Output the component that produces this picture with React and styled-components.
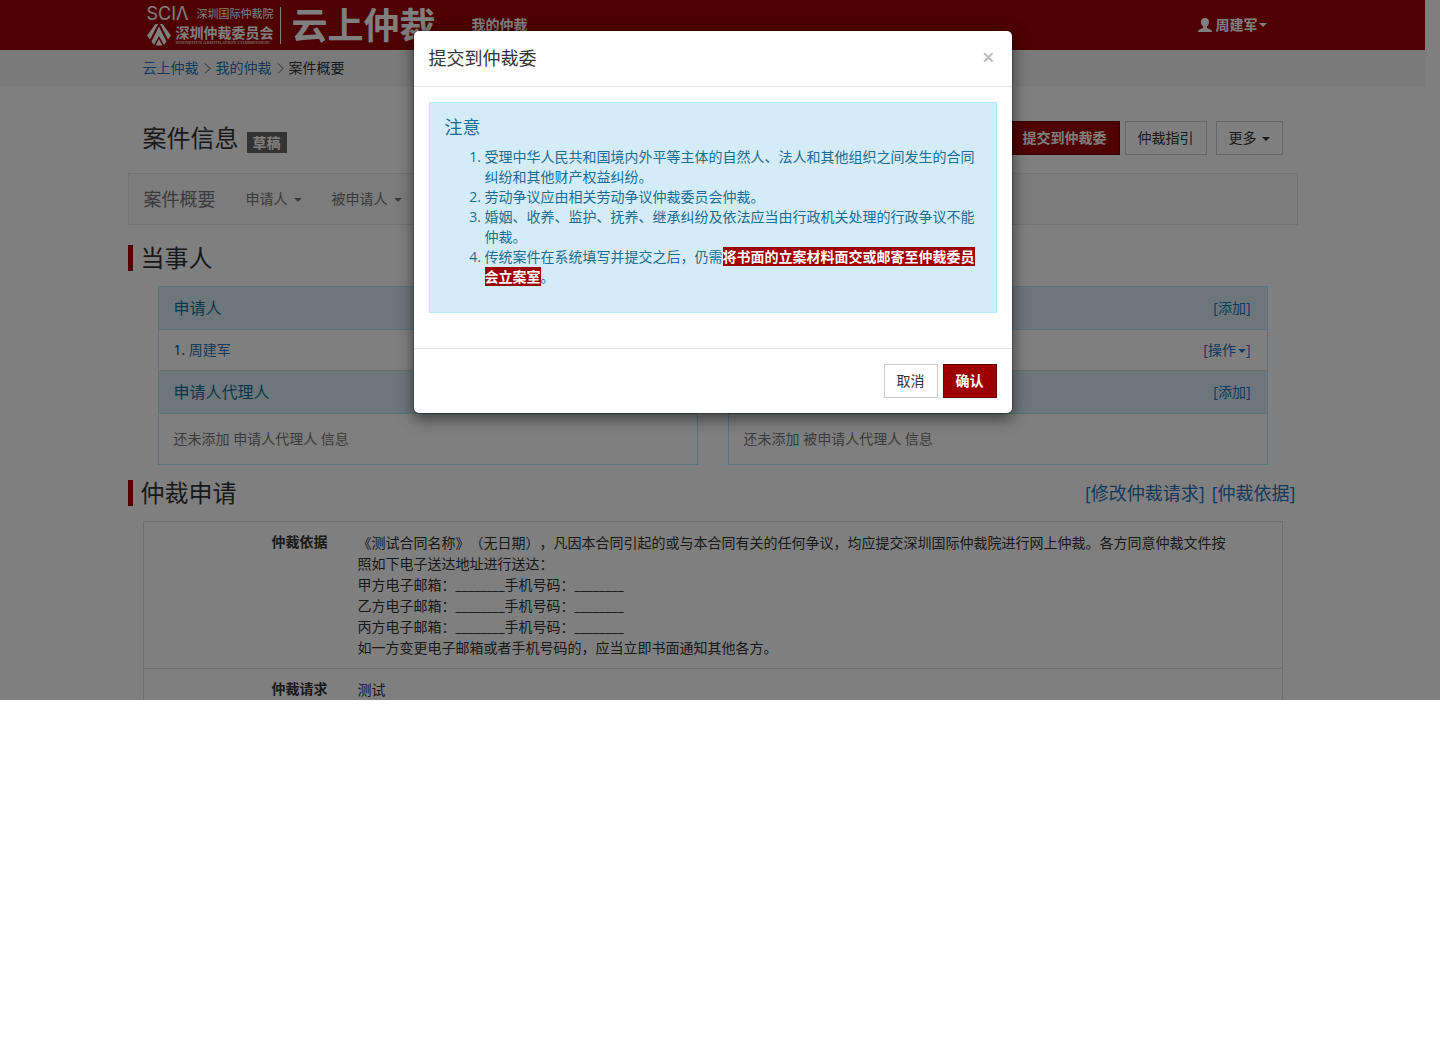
import React from 'react';
import styled, { createGlobalStyle, css } from 'styled-components';

const red = '#9e0000';
const blue = '#2672b8';

const GlobalStyle = createGlobalStyle`
  *, *::before, *::after { box-sizing: border-box; }
  body {
    margin: 0;
    background: #fff;
    color: #333;
    font-family: "Open Sans", "Noto Sans CJK SC", sans-serif;
    font-size: 14px;
    line-height: 20px;
    text-spacing-trim: space-all;
  }
  button { font-family: inherit; }
  h1, h2, h3, h4, p, ol, ul, dl, dd { margin: 0; padding: 0; font-weight: 400; }
`;

const Screen = styled.div`
  position: relative;
  max-height: 700px;
  overflow: hidden;
  padding-right: 15px;
`;

const Container = styled.div`
  width: 100%;
  max-width: 1170px;
  margin: 0 auto;
`;

const TopBar = styled.header`
  background: ${red};
`;

const TopBarInner = styled(Container)`
  display: flex;
  align-items: center;
  height: 50px;
  padding: 0 31px 0 19px;
`;

const Brand = styled.a`
  display: flex;
  align-items: center;
  gap: 6px;
  color: #fff;
  text-decoration: none;
`;

const BrandNames = styled.span`
  display: flex;
  flex-direction: column;
  gap: 2px;
  padding-top: 2px;
`;

const BrandLine = styled.span`
  display: flex;
  align-items: center;
  justify-content: space-between;
  gap: 5px;
  height: ${p => (p.$tall ? '22px' : '16px')};
`;

const Latin = styled.span`
  font: 400 18px/16px Inter, sans-serif;
`;

const Institute = styled.span`
  font-size: 11px;
  line-height: 16px;
`;

const Commission = styled.span`
  display: flex;
  flex-direction: column;
  font-size: 14px;
  font-weight: 700;
  line-height: 15px;
`;

const CommissionLatin = styled.span`
  font: 400 5px/6px "Liberation Serif", serif;
`;

const BrandRule = styled.span`
  width: 1px;
  height: 37px;
  background: #fff;
`;

const Product = styled.span`
  padding: 2px 0 0 5px;
  font-size: 36px;
  font-weight: 700;
  line-height: 40px;
`;

const TopLink = styled.a`
  margin-left: 36px;
  color: #fff;
  font-weight: 700;
  text-decoration: none;
`;

const UserButton = styled.button`
  display: flex;
  align-items: center;
  margin-left: auto;
  padding: 0;
  border: 0;
  background: none;
  color: #fff;
  font-size: 14px;
  font-weight: 700;
  line-height: 20px;
  svg { margin-right: 4px; }
`;

const Caret = styled.span`
  display: inline-block;
  margin-left: ${p => p.$gap || 0}px;
  border-top: 4px solid;
  border-left: 4px solid transparent;
  border-right: 4px solid transparent;
  vertical-align: middle;
`;

const CrumbBar = styled.nav`
  background: #f5f5f5;
`;

const Crumbs = styled(Container)`
  display: flex;
  align-items: center;
  gap: 5px;
  padding: 8px 15px;
`;

const Link = styled.a`
  color: ${blue};
  text-decoration: none;
`;

const TitleRow = styled.div`
  display: flex;
  align-items: center;
  padding: 35px 15px 18px;
`;

const Title = styled.h1`
  font-size: 24px;
  line-height: 34px;
`;

const Tag = styled.span`
  margin: 8px 0 0 8px;
  padding: 0 6px;
  background: #666;
  color: #fff;
  font-size: 14px;
  font-weight: 700;
  line-height: 21px;
`;

const Actions = styled.div`
  display: flex;
  gap: 5px;
  margin-left: auto;
`;

const Button = styled.button`
  padding: 6px 12px;
  border: 1px solid #ccc;
  margin-left: ${p => (p.$apart ? '4px' : '0')};
  background: #fff;
  color: #333;
  font-size: 14px;
  line-height: 20px;
  ${p => p.$primary && css`
    border-color: #6b0000;
    background: ${red};
    color: #fff;
    font-weight: 700;
  `}
`;

const CaseNav = styled.nav`
  display: flex;
  align-items: center;
  gap: 30px;
  height: 52px;
  padding: 0 15px;
  border: 1px solid #e7e7e7;
  background: #f8f8f8;
`;

const CaseNavBrand = styled.a`
  color: #777;
  font-size: 18px;
  text-decoration: none;
`;

const CaseNavItem = styled.button`
  padding: 0;
  border: 0;
  background: none;
  color: #777;
  font-size: 14px;
  line-height: 20px;
`;

const SectionHead = styled.div`
  display: flex;
  align-items: center;
  justify-content: space-between;
  height: 26px;
  margin: ${p => p.$top}px 0 15px;
  padding: 0 2px 0 8px;
  border-left: 5px solid ${red};
`;

const SectionTitle = styled.h2`
  font-size: 24px;
  line-height: 26px;
`;

const SectionLinks = styled.div`
  display: flex;
  gap: 7px;
  font-size: 18px;
`;

const Parties = styled.div`
  display: grid;
  grid-template-columns: 1fr 1fr;
  gap: 30px;
  padding: 0 30px;
`;

const Party = styled.section`
  border: 1px solid #b2ebf2;
`;

const PartyHead = styled.div`
  display: flex;
  align-items: center;
  justify-content: space-between;
  height: 43px;
  padding: 0 16px 0 15px;
  border-bottom: 1px solid #b2ebf2;
  background: #d9edf7;
`;

const PartyTitle = styled.h3`
  color: #1b6d93;
  font-size: 16px;
`;

const PartyRow = styled.div`
  display: flex;
  justify-content: space-between;
  padding: 10px 16px 10px 15px;
  border-bottom: 1px solid #ddd;
`;

const MenuLink = styled.button`
  padding: 0;
  border: 0;
  background: none;
  color: ${blue};
  font-size: 14px;
  line-height: 20px;
`;

const Empty = styled.p`
  padding: 15px;
  color: #777;
`;

const Claims = styled.dl`
  margin: 0 15px;
  border: 1px solid #ddd;
`;

const Claim = styled.div`
  display: grid;
  grid-template-columns: 184px 1fr;
  gap: 30px;
  padding: 10px 43px 10px 0;
  line-height: 21px;
  & + & { border-top: 1px solid #ddd; }
`;

const ClaimLabel = styled.dt`
  font-weight: 700;
  line-height: 20px;
  text-align: right;
`;

const Backdrop = styled.div`
  position: absolute;
  inset: 0;
  padding: 30px 15px 30px 0;
  background: rgba(0, 0, 0, 0.5);
`;

const Dialog = styled.div`
  width: 100%;
  max-width: 600px;
  margin: 0 auto;
  border: 1px solid rgba(0, 0, 0, 0.2);
  border-radius: 6px;
  background: #fff;
  background-clip: padding-box;
  box-shadow: 0 5px 15px rgba(0, 0, 0, 0.5);
`;

const DialogHead = styled.div`
  display: flex;
  justify-content: space-between;
  padding: 15px;
  border-bottom: 1px solid #e5e5e5;
`;

const DialogTitle = styled.h2`
  font-size: 18px;
  line-height: 25px;
`;

const Close = styled.button`
  align-self: flex-start;
  padding: 0 2px;
  border: 0;
  background: none;
  color: #bbb;
  font-size: 22px;
  font-weight: 600;
  line-height: 20px;
`;

const DialogBody = styled.div`
  padding: 15px 15px 35px;
`;

const Notice = styled.div`
  padding: 14px 15px 25px;
  border: 1px solid #b2ebf2;
  background: #d4ecf8;
  color: #1b6d93;
`;

const NoticeTitle = styled.h3`
  margin-bottom: 10px;
  font-size: 18px;
  line-height: 20px;
`;

const Rules = styled.ol`
  padding-left: 40px;
`;

const Mark = styled.strong`
  background: ${red};
  color: #fff;
`;

const DialogFoot = styled.div`
  display: flex;
  justify-content: flex-end;
  gap: 5px;
  padding: 15px;
  border-top: 1px solid #e5e5e5;
`;

const Emblem = () => (
  <svg width="24" height="22" viewBox="0 0 24 22" fill="#fff" aria-hidden="true">
    <path d="M8.500 0H11L3 15.500L0 11.500Z" />
    <path d="M15.500 0H13L21 15.500L24 11.500Z" />
    <path d="M12 2.500L19.500 17.500L17 21L12 12L7 21L4.500 17.500Z" />
    <path d="M12 15L15.500 21.500H8.500Z" />
  </svg>
);

const UserIcon = () => (
  <svg width="14" height="14" viewBox="0 0 14 14" fill="#fff" aria-hidden="true">
    <path d="M7 0C9.600 0 11 1.500 11 4C11 6 10.200 7.300 9 8.400C8.600 8.900 8.700 9.700 9.300 10L12.800 11.700C13.700 12.200 14 13 14 14H0C0 13 .3 12.200 1.200 11.700L4.700 10C5.300 9.700 5.400 8.900 5 8.400C3.800 7.300 3 6 3 4C3 1.500 4.400 0 7 0Z" />
  </svg>
);

const Chevron = () => (
  <svg width="7" height="11" viewBox="0 0 7 11" fill="none" stroke="#555" aria-hidden="true">
    <path d="M1 .5L6 5.500L1 10.500" />
  </svg>
);

const contacts = ['甲方', '乙方', '丙方'];

const parties = [
  { role: '申请人', name: '周建军' },
  { role: '被申请人', name: '测试' },
];

export default function App() {
  return (
    <>
      <GlobalStyle />
      <Screen>
        <TopBar>
          <TopBarInner>
            <Brand href="#home">
              <BrandNames>
                <BrandLine>
                  <Latin>SCIΛ</Latin>
                  <Institute>深圳国际仲裁院</Institute>
                </BrandLine>
                <BrandLine $tall>
                  <Emblem />
                  <Commission>
                    深圳仲裁委员会
                    <CommissionLatin>SHENZHEN ARBITRATION COMMISSION</CommissionLatin>
                  </Commission>
                </BrandLine>
              </BrandNames>
              <BrandRule />
              <Product>云上仲裁</Product>
            </Brand>
            <TopLink href="#mine">我的仲裁</TopLink>
            <UserButton type="button">
              <UserIcon />周建军<Caret $gap={1} />
            </UserButton>
          </TopBarInner>
        </TopBar>
        <CrumbBar>
          <Crumbs>
            <Link href="#home">云上仲裁</Link>
            <Chevron />
            <Link href="#mine">我的仲裁</Link>
            <Chevron />
            <span>案件概要</span>
          </Crumbs>
        </CrumbBar>

        <Container as="main">
          <TitleRow>
            <Title>案件信息</Title>
            <Tag>草稿</Tag>
            <Actions>
              <Button type="button" $primary>提交到仲裁委</Button>
              <Button type="button">仲裁指引</Button>
              <Button type="button" $apart>更多<Caret $gap={5} /></Button>
            </Actions>
          </TitleRow>

          <CaseNav>
            <CaseNavBrand href="#summary">案件概要</CaseNavBrand>
            <CaseNavItem type="button">申请人<Caret $gap={6} /></CaseNavItem>
            <CaseNavItem type="button">被申请人<Caret $gap={6} /></CaseNavItem>
          </CaseNav>

          <SectionHead $top={20}>
            <SectionTitle>当事人</SectionTitle>
          </SectionHead>
          <Parties>
            {parties.map(({ role, name }) => (
              <Party key={role}>
                <PartyHead>
                  <PartyTitle>{role}</PartyTitle>
                  <Link href="#add">[添加]</Link>
                </PartyHead>
                <PartyRow>
                  <span>1. <Link href="#party">{name}</Link></span>
                  <MenuLink type="button">[操作<Caret $gap={2} />]</MenuLink>
                </PartyRow>
                <PartyHead>
                  <PartyTitle>{role}代理人</PartyTitle>
                  <Link href="#add-agent">[添加]</Link>
                </PartyHead>
                <Empty>还未添加 {role}代理人 信息</Empty>
              </Party>
            ))}
          </Parties>

          <SectionHead $top={15}>
            <SectionTitle>仲裁申请</SectionTitle>
            <SectionLinks>
              <Link href="#edit">[修改仲裁请求]</Link>
              <Link href="#basis">[仲裁依据]</Link>
            </SectionLinks>
          </SectionHead>
          <Claims>
            <Claim>
              <ClaimLabel>仲裁依据</ClaimLabel>
              <dd>
                <p>《测试合同名称》（无日期），凡因本合同引起的或与本合同有关的任何争议，均应提交深圳国际仲裁院进行网上仲裁。各方同意仲裁文件按照如下电子送达地址进行送达：</p>
                {contacts.map(c => <p key={c}>{c}电子邮箱：________手机号码：________</p>)}
                <p>如一方变更电子邮箱或者手机号码的，应当立即书面通知其他各方。</p>
              </dd>
            </Claim>
            <Claim>
              <ClaimLabel>仲裁请求</ClaimLabel>
              <dd>测试</dd>
            </Claim>
          </Claims>
        </Container>

        <Backdrop>
          <Dialog role="dialog" aria-modal="true" aria-labelledby="dialog-title">
            <DialogHead>
              <DialogTitle id="dialog-title">提交到仲裁委</DialogTitle>
              <Close type="button" aria-label="关闭">×</Close>
            </DialogHead>
            <DialogBody>
              <Notice>
                <NoticeTitle>注意</NoticeTitle>
                <Rules>
                  <li>受理中华人民共和国境内外平等主体的自然人、法人和其他组织之间发生的合同纠纷和其他财产权益纠纷。</li>
                  <li>劳动争议应由相关劳动争议仲裁委员会仲裁。</li>
                  <li>婚姻、收养、监护、抚养、继承纠纷及依法应当由行政机关处理的行政争议不能仲裁。</li>
                  <li>传统案件在系统填写并提交之后，仍需<Mark>将书面的立案材料面交或邮寄至仲裁委员会立案室</Mark>。</li>
                </Rules>
              </Notice>
            </DialogBody>
            <DialogFoot>
              <Button type="button">取消</Button>
              <Button type="button" $primary>确认</Button>
            </DialogFoot>
          </Dialog>
        </Backdrop>
      </Screen>
    </>
  );
}
